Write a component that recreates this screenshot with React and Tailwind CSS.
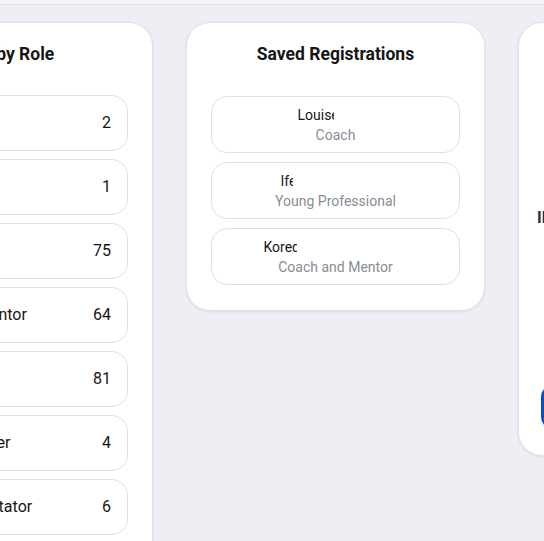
const roleCounts = [
  { role: 'Admin', count: 2 },
  { role: 'Organizer', count: 1 },
  { role: 'Coach', count: 75 },
  { role: 'Coach and Mentor', count: 64 },
  { role: 'Mentor', count: 81 },
  { role: 'Events Manager', count: 4 },
  { role: 'Program Facilitator', count: 6 },
  { role: 'Partner', count: 3 },
];

// names are only partly painted in the screenshot, so clip them
const saved = [
  { name: 'Louise Martin', role: 'Coach', full: 'w-[76px]', shown: 'w-[36px]' },
  { name: 'Ifeoma Adeyemi-Cole', role: 'Young Professional', full: 'w-[110px]', shown: 'w-[12px]' },
  { name: 'Korede Ogunbanjo-Smith', role: 'Coach and Mentor', full: 'w-[144px]', shown: 'w-[33px]' },
];

function Card({ children, className = '', pad = 'px-6' }) {
  return (
    <div className={`w-[299px] shrink-0 bg-white rounded-[24px] border border-[#e2e2e6] shadow-[0_1px_3px_rgba(0,0,0,0.08)] pt-[21px] ${pad} ${className}`}>
      {children}
    </div>
  );
}

export default function App() {
  return (
    <div className="min-h-screen bg-[#eeeff4] overflow-hidden font-['Roboto',sans-serif] text-[#161616]">
      <div className="h-[5px] bg-[#f6f6f8] border-b border-[#e3e4e9]" />

      <div className="flex items-start gap-[33px] -ml-[146px] pt-[17px]">
        <Card className="pb-6">
          <h2 className="text-[17.5px] leading-5 font-bold text-center">Total by Role</h2>
          <div className="mt-[31px] flex flex-col gap-2">
            {roleCounts.map((r) => (
              <div
                key={r.role}
                className="h-14 flex items-center justify-between px-4 rounded-2xl border border-[#e0e0e0] text-[16px]"
              >
                <span className="whitespace-nowrap">{r.role}</span>
                <span>{r.count}</span>
              </div>
            ))}
          </div>
        </Card>

        <Card className="pb-[25px]">
          <h2 className="text-[17.5px] leading-5 font-bold text-center">Saved Registrations</h2>
          <div className="mt-[32px] flex flex-col gap-[9px]">
            {saved.map((s) => (
              <div
                key={s.role}
                className="h-[57px] flex flex-col justify-center rounded-2xl border border-[#e0e0e0] text-[14px] leading-5"
              >
                <div className={`mx-auto ${s.full}`}>
                  <div className={`${s.shown} overflow-hidden whitespace-nowrap`}>{s.name}</div>
                </div>
                <div className="text-center text-[#878d96]">{s.role}</div>
              </div>
            ))}
          </div>
        </Card>

        <Card pad="px-[22px]" className="h-[434px] pb-[26px] flex flex-col">
          <h2 className="text-[17.5px] leading-5 font-bold text-center">New Registration</h2>
          <div className="mt-[144px] -ml-[4px] text-[16px] leading-5 font-bold text-[#2b2a48] whitespace-nowrap">
            ID Number
          </div>
          <div className="flex-1" />
          <button className="h-[44px] w-full rounded-xl bg-[#0b4fc4] text-white text-[15px] font-medium">
            Save Registration
          </button>
        </Card>
      </div>
    </div>
  );
}
